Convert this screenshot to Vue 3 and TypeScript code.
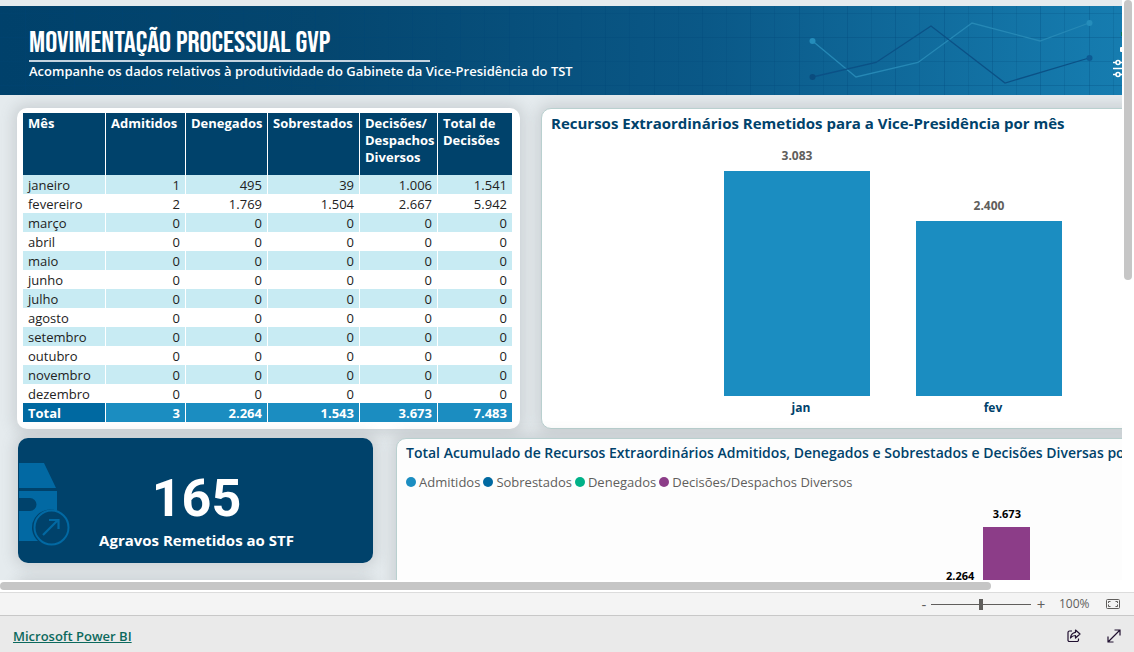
<script setup lang="ts">
import { ref } from 'vue'

interface Row {
  month: string
  values: string[]
}

const columns: string[] = ['Mês', 'Admitidos', 'Denegados', 'Sobrestados', 'Decisões/ Despachos Diversos', 'Total de Decisões']
const zeros: string[] = ['0', '0', '0', '0', '0']
const rows: Row[] = [
  { month: 'janeiro', values: ['1', '495', '39', '1.006', '1.541'] },
  { month: 'fevereiro', values: ['2', '1.769', '1.504', '2.667', '5.942'] },
  ...['março', 'abril', 'maio', 'junho', 'julho', 'agosto', 'setembro', 'outubro', 'novembro', 'dezembro'].map(
    (month) => ({ month, values: zeros }),
  ),
]
const totals: string[] = ['3', '2.264', '1.543', '3.673', '7.483']

const monthly = [
  { label: 'jan', text: '3.083', value: 3083 },
  { label: 'fev', text: '2.400', value: 2400 },
]
const barHeight = (value: number): string => `${Math.round(value * 0.073)}px`

const legend = [
  { name: 'Admitidos', color: 'c-light' },
  { name: 'Sobrestados', color: 'c-blue' },
  { name: 'Denegados', color: 'c-green' },
  { name: 'Decisões/Despachos Diversos', color: 'c-purple' },
]

const gridX = Array.from({ length: 53 }, (_, i) => 1 + Math.round((i * 145) / 6))
const gridY = [7, 31, 55, 79]
const zoom = ref(100)
</script>

<template>
  <div class="app">
    <div class="stage">
      <div class="viewport">
        <main class="canvas">
          <header class="banner">
            <svg class="banner-art" width="1280" height="89" viewBox="0 0 1280 89" aria-hidden="true">
              <g fill="#004577">
                <rect v-for="(x, i) in gridX" :key="'x' + x" :x="x" y="0" width="1" height="89" :opacity="i % 2 ? 0.26 : 0.16" />
                <rect v-for="(y, i) in gridY" :key="'y' + y" x="0" :y="y" width="1280" height="1" :opacity="i % 2 ? 0.26 : 0.2" />
              </g>
              <g fill="none" stroke-width="1.3">
                <path d="M812.5 35 856 71 918 56.500 972 17 1040 35 1089 17" stroke="#2688b5" />
                <path d="M812.500 71 876 56.500 931 20 1005 77 1089 52" stroke="#0b5186" />
              </g>
              <g fill="#258dbb"><circle cx="812.500" cy="35" r="3" /><circle cx="1089.500" cy="17" r="3" /></g>
              <g fill="#0a4c7e"><circle cx="812.500" cy="71" r="3" /><circle cx="1089.500" cy="52" r="3" fill="#0d5b94" /></g>
              <g stroke="#fff" fill="none" stroke-width="1.600">
                <path d="M1113 56.500h3M1120 56.500h3M1113 62.500h16M1113 68.500h3M1120 68.500h3" />
                <circle cx="1118" cy="56.500" r="2" /><circle cx="1118" cy="68.500" r="2" />
              </g>
              <rect x="1120" y="41" width="6" height="5" rx="1" fill="#fff" />
              <rect x="1121" y="26" width="5" height="4" fill="#0a7c5c" />
            </svg>
            <h1>MOVIMENTAÇÃO PROCESSUAL GVP</h1>
            <p>Acompanhe os dados relativos à produtividade do Gabinete da Vice-Presidência do TST</p>
          </header>

          <div class="row">
            <section class="card table-card">
              <table>
                <colgroup>
                  <col class="w-month" /><col class="w-adm" /><col class="w-den" /><col class="w-sob" /><col class="w-dec" /><col class="w-tot" />
                </colgroup>
                <thead>
                  <tr><th v-for="c in columns" :key="c" scope="col">{{ c }}</th></tr>
                </thead>
                <tbody>
                  <tr v-for="r in rows" :key="r.month">
                    <th scope="row">{{ r.month }}</th>
                    <td v-for="(v, i) in r.values" :key="i">{{ v }}</td>
                  </tr>
                </tbody>
                <tfoot>
                  <tr>
                    <th scope="row">Total</th>
                    <td v-for="(v, i) in totals" :key="i">{{ v }}</td>
                  </tr>
                </tfoot>
              </table>
            </section>

            <section class="card outlined month-chart">
              <h2>Recursos Extraordinários Remetidos para a Vice-Presidência por mês</h2>
              <div class="bars">
                <div v-for="m in monthly" :key="m.label" class="bar-col">
                  <span>{{ m.text }}</span>
                  <div class="bar" :style="{ height: barHeight(m.value) }"></div>
                </div>
              </div>
              <div class="axis"><span v-for="m in monthly" :key="m.label">{{ m.label }}</span></div>
            </section>
          </div>

          <div class="row second">
            <div class="side">
              <section class="kpi">
                <svg class="kpi-art" width="54" height="84" viewBox="0 0 54 84" aria-hidden="true">
                  <path d="M1 0h25l12 25H1zM1 28h38v20a18 18 0 0 0-19 30H1V48h11a6.500 6.500 0 0 0 0-13H1z" fill="#0269a3" />
                  <circle cx="33.500" cy="64.500" r="17" fill="#00426b" stroke="#0269a3" stroke-width="2" />
                  <path d="M25 72 40 57M31 57h9.500v9" fill="none" stroke="#0269a3" stroke-width="2.200" />
                </svg>
                <strong>165</strong>
                <p>Agravos Remetidos ao STF</p>
              </section>
              <section class="kpi"></section>
            </div>
            <section class="card outlined total-chart">
              <h2>Total Acumulado de Recursos Extraordinários Admitidos, Denegados e Sobrestados e Decisões Diversas por mês</h2>
              <ul class="legend">
                <li v-for="l in legend" :key="l.name"><i :class="l.color"></i>{{ l.name }}</li>
              </ul>
              <div class="total-bars">
                <span class="lower">2.264</span>
                <div class="purple-col"><span>3.673</span><div class="purple-bar"></div></div>
              </div>
            </section>
          </div>
        </main>
      </div>
      <div class="v-scroll"><div></div></div>
    </div>
    <div class="h-scroll"><div></div></div>

    <div class="zoom-bar">
      <button type="button" class="step" aria-label="Reduzir" @click="zoom -= 10">-</button>
      <input v-model.number="zoom" type="range" min="0" max="200" aria-label="Zoom" />
      <button type="button" class="step" aria-label="Ampliar" @click="zoom += 10">+</button>
      <button type="button" class="percent">{{ zoom }}%</button>
      <button type="button" class="icon" aria-label="Ajustar à página">
        <svg width="14" height="12" viewBox="0 0 14 12" fill="none" stroke="#5f5d5b">
          <rect x=".5" y="1.500" width="13" height="9" rx="1" />
          <path d="M4.500 3.500h-2v1.500M2.500 6.500v2h2M9.500 3.500h2v1.500M11.500 6.500v2h-2" />
        </svg>
      </button>
    </div>

    <footer>
      <a href="#">Microsoft Power BI</a>
      <div class="actions">
        <button type="button" class="icon" aria-label="Compartilhar">
          <svg width="14" height="14" viewBox="0 0 14 14" fill="none" stroke="#201030" stroke-width="1.200" stroke-linejoin="round">
            <path d="M5 2H2.500A1.500 1.500 0 0 0 1 3.500v7A1.500 1.500 0 0 0 2.500 12.500h7.500a1.500 1.500 0 0 0 1.500-1.500V9.500" />
            <path d="M8.500 1l4.500 4-4.500 4V6.500C6 6.500 4.800 7.200 3.500 9 3.800 5.800 5.500 3.700 8.500 3.300z" />
          </svg>
        </button>
        <button type="button" class="icon" aria-label="Tela inteira">
          <svg width="14" height="14" viewBox="0 0 14 14" fill="none" stroke="#201030" stroke-width="1.200">
            <path d="M1 13 13 1M7.500 1H13v5.500M1 7.500V13h5.500" />
          </svg>
        </button>
      </div>
    </footer>
  </div>
</template>

<style>
body {
  margin: 0;
}
</style>

<style scoped>
* {
  box-sizing: border-box;
}
.app {
  display: flex;
  flex-direction: column;
  height: 100vh;
  font-family: 'Open Sans', 'Noto Sans', sans-serif;
  background: #fff;
}
h1,
h2,
p,
ul {
  margin: 0;
  padding: 0;
}
button {
  border: 0;
  padding: 0;
  background: none;
  font: inherit;
  color: inherit;
}
.stage {
  flex: 1;
  min-height: 0;
  display: flex;
}
.viewport {
  flex: 1;
  min-width: 0;
  overflow: hidden;
}
.canvas {
  min-width: 1280px;
  padding-top: 6px;
  background: #e5ebee;
}
.banner {
  position: relative;
  height: 89px;
  padding: 23px 29px 0;
  color: #fff;
  background: linear-gradient(90deg, #00416b 0%, #04466f 25%, #0a5887 55%, #157aad 85%, #1b86bb 100%);
}
.banner-art {
  position: absolute;
  top: 0;
  left: 0;
}
.banner h1 {
  position: relative;
  width: 401px;
  height: 33px;
  border-bottom: 2px solid #c3d3df;
  font: 400 30px/29px 'Bebas Neue', 'Liberation Sans Narrow', sans-serif;
  white-space: nowrap;
}
.banner p {
  position: relative;
  font-size: 13px;
  font-weight: 600;
  line-height: 18px;
}
.row {
  display: flex;
  gap: 21px;
  padding: 13px 17px 0;
}
.row.second {
  gap: 23px;
  padding: 9px 18px 0;
}
.card {
  background: #fff;
  border-radius: 10px;
  box-shadow: 0 0 14px 4px rgba(100, 105, 110, 0.2);
}
.outlined {
  border: 1px solid #b9d0cf;
}
.table-card {
  width: 503px;
  padding: 5px 6px 7px;
}
table {
  width: 489px;
  table-layout: fixed;
  border-collapse: separate;
  border-spacing: 0;
  font-size: 13px;
  line-height: 17px;
}
.w-month { width: 83px; }
.w-adm { width: 80px; }
.w-den { width: 82px; }
.w-sob { width: 92px; }
.w-dec { width: 78px; }
.w-tot { width: 74px; }
th,
td {
  height: 19px;
  padding: 2px 5px 0 5px;
  border-right: 1px solid #fff;
}
th:last-child,
td:last-child {
  border-right: 0;
}
td {
  text-align: right;
}
th {
  text-align: left;
}
thead th {
  height: 62px;
  padding: 2px 0 0 5px;
  background: #00426b;
  color: #fff;
  vertical-align: top;
}
tbody {
  color: #222;
}
tbody th {
  font-weight: 400;
}
tbody tr:nth-child(odd) {
  background: #c8ebf3;
}
tfoot {
  color: #fff;
  font-weight: 700;
  background: #1b8dc1;
}
tfoot th {
  background: #0069a1;
}
h2 {
  color: #00426b;
  font-size: 15px;
  line-height: 20px;
  font-weight: 700;
  white-space: nowrap;
}
.month-chart {
  flex: 1;
  padding: 4px 9px;
}
.bars {
  display: flex;
  gap: 46px;
  align-items: flex-end;
  height: 263px;
  padding-left: 173px;
}
.bar-col {
  width: 146px;
  text-align: center;
  font-size: 12px;
  line-height: 16px;
  font-weight: 700;
  color: #605e5c;
}
.bar-col span {
  display: block;
  padding-bottom: 7px;
}
.bar {
  background: #1b8dc1;
}
.axis {
  display: flex;
  gap: 46px;
  padding: 4px 0 0 177px;
  color: #00426b;
  font-size: 12px;
  line-height: 16px;
  font-weight: 700;
}
.axis span {
  width: 146px;
  text-align: center;
}
.side {
  width: 355px;
  display: flex;
  flex-direction: column;
  gap: 18px;
}
.kpi {
  position: relative;
  height: 125px;
  padding: 35px 0 0 2px;
  text-align: center;
  color: #fff;
  background: #00426b;
  border-radius: 10px;
  box-shadow: 0 0 14px 4px rgba(100, 105, 110, 0.2);
}
.kpi-art {
  position: absolute;
  left: 0;
  top: 25px;
}
.kpi strong {
  display: block;
  font: 700 52px/52px Roboto, sans-serif;
}
.kpi p {
  padding-top: 4px;
  font-size: 15px;
  line-height: 22px;
  font-weight: 700;
}
.total-chart {
  flex: 1;
  padding: 4px 9px;
  background: #fdfdfd;
}
.total-chart h2 {
  font-size: 14px;
  font-weight: 600;
}
.legend {
  display: flex;
  gap: 3px;
  margin-top: 10px;
  list-style: none;
  font-size: 13px;
  line-height: 18px;
  color: #605e5c;
}
.legend li {
  display: flex;
  align-items: center;
  gap: 3px;
}
.legend i {
  width: 10px;
  height: 10px;
  border-radius: 50%;
}
.c-light { background: #1b8dc1; }
.c-blue { background: #0069a1; }
.c-green { background: #00b188; }
.c-purple { background: #8c3d88; }
.total-bars {
  display: flex;
  gap: 9px;
  align-items: flex-start;
  margin-top: 15px;
  padding-left: 540px;
  font-size: 11px;
  line-height: 16px;
  font-weight: 700;
}
.lower {
  padding-top: 62px;
}
.purple-col {
  width: 47px;
  text-align: center;
}
.purple-col span {
  display: block;
}
.purple-bar {
  height: 120px;
  margin-top: 5px;
  background: #8c3d88;
}
.v-scroll {
  width: 12px;
  padding-left: 2px;
}
.v-scroll div {
  width: 8px;
  height: 280px;
  border-radius: 4px;
  background: #c6c6c6;
}
.h-scroll {
  height: 12px;
  padding-top: 2px;
}
.h-scroll div {
  width: 991px;
  height: 8px;
  border-radius: 4px;
  background: #c6c6c6;
}
.zoom-bar {
  display: flex;
  align-items: center;
  justify-content: flex-end;
  height: 24px;
  padding-right: 14px;
  border-top: 1px solid #dcdcdc;
  border-bottom: 1px solid #c8c8c8;
  background: #f4f4f4;
  color: #605e5c;
  font-size: 12px;
  line-height: 18px;
}
.step {
  width: 14px;
  font-size: 15px;
}
.percent {
  width: 29px;
  margin: 0 18px 0 11px;
}
.icon {
  display: flex;
}
.zoom-bar input {
  appearance: none;
  width: 100px;
  height: 12px;
  margin: 0 3px 0 0;
  background: linear-gradient(#605e5c, #605e5c) center / 100% 1px no-repeat;
}
.zoom-bar input::-webkit-slider-thumb {
  appearance: none;
  width: 4px;
  height: 11px;
  background: #605e5c;
}
footer {
  display: flex;
  align-items: center;
  justify-content: space-between;
  height: 36px;
  padding: 4px 13px 0;
  background: #eaeaea;
}
footer a {
  color: #0c695d;
  font-size: 13px;
  line-height: 18px;
  font-weight: 600;
}
.actions {
  display: flex;
  gap: 26px;
}
</style>
